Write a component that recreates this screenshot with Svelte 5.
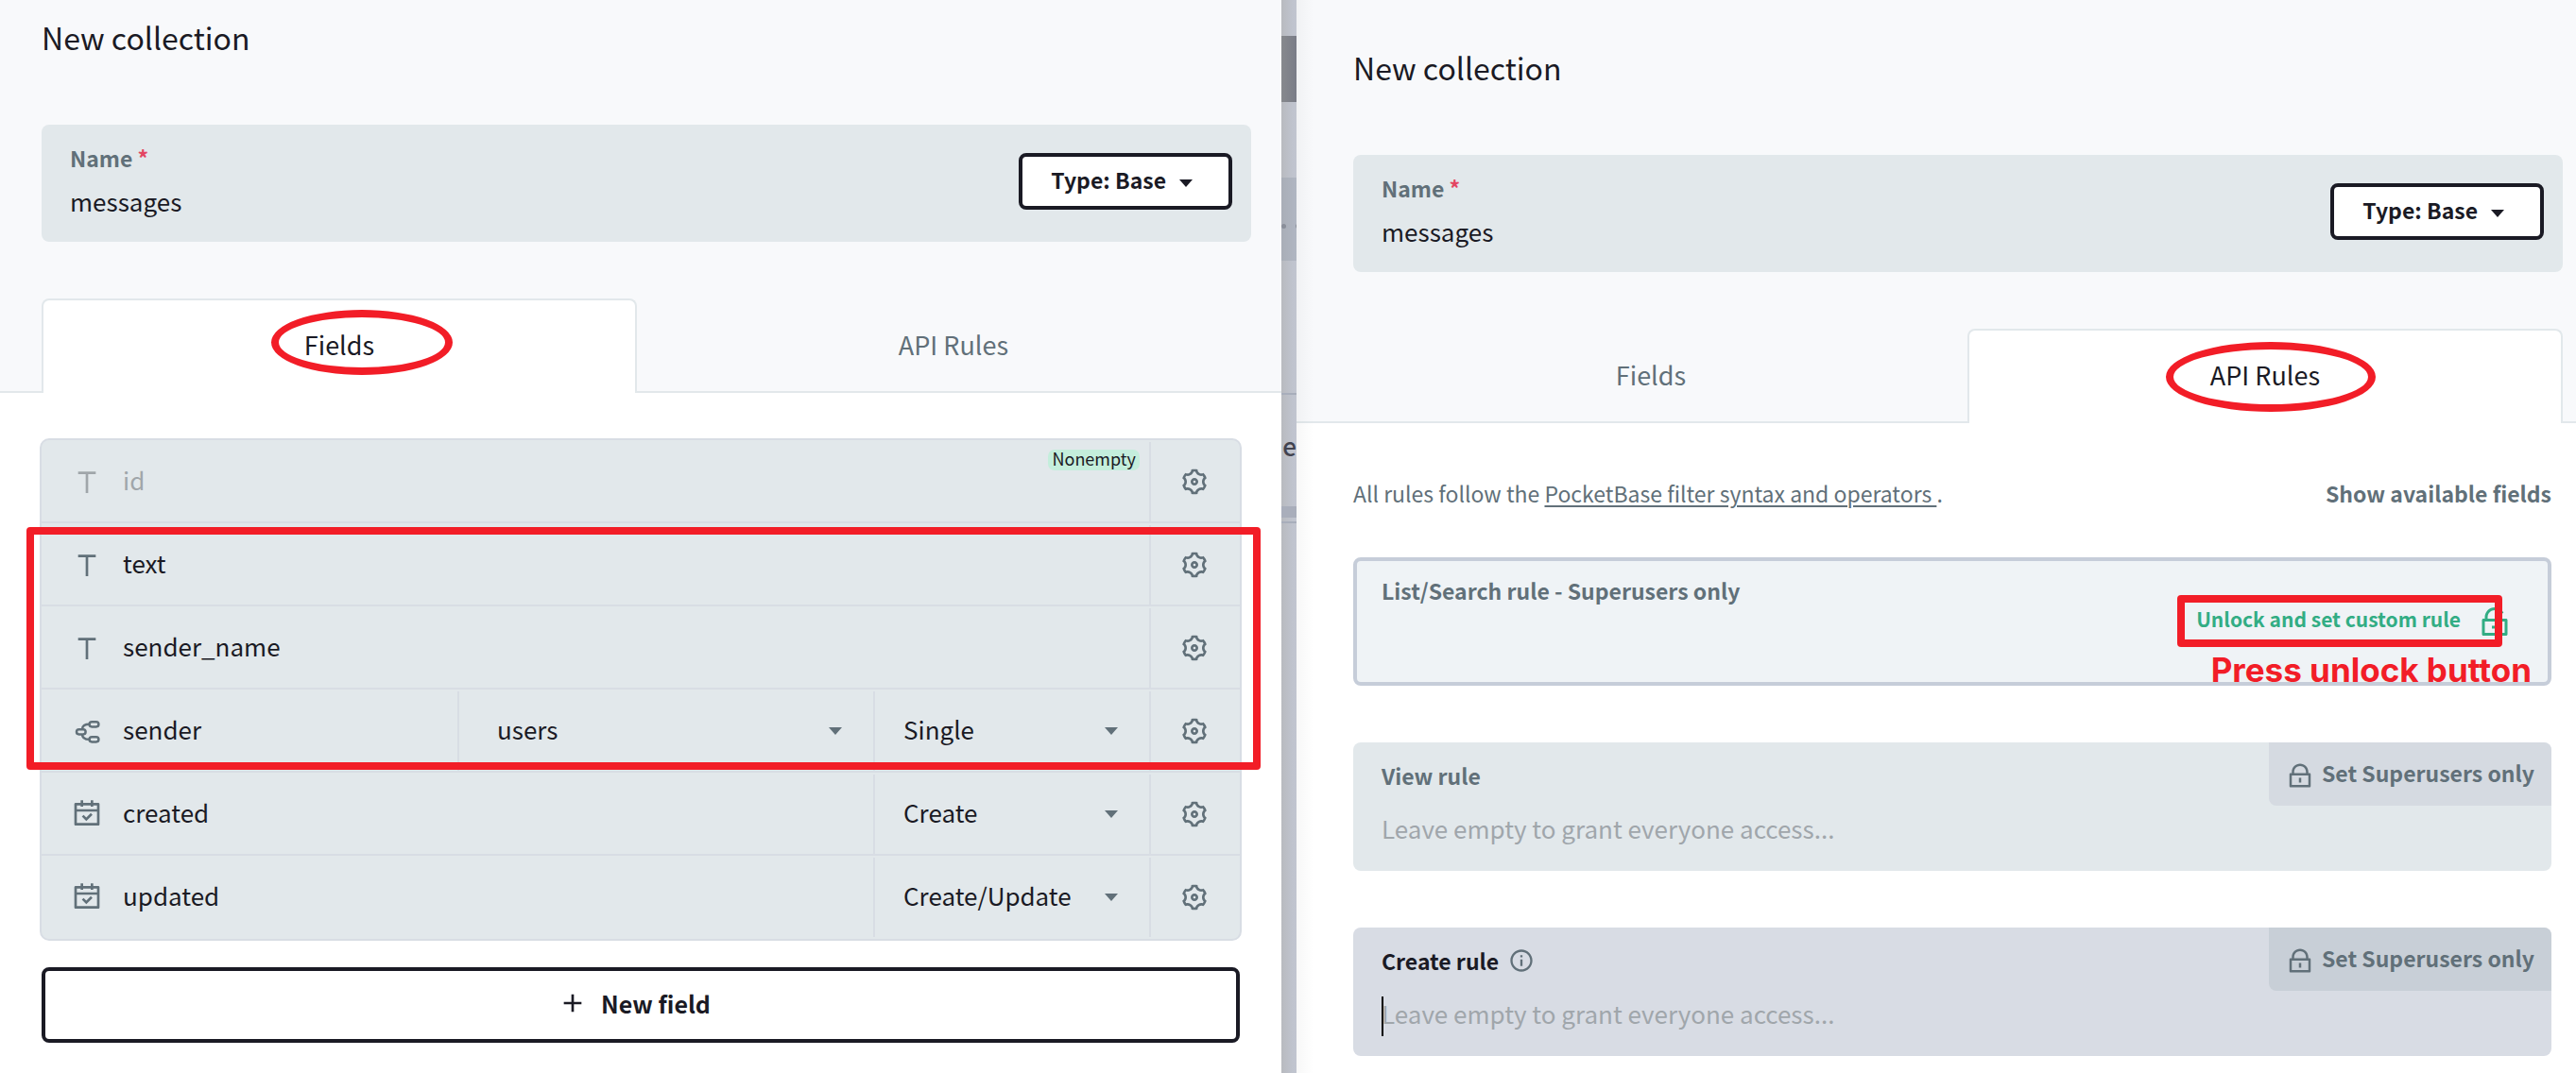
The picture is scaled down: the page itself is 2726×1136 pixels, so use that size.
<script>
  const fields = [
    { name: 'id', icon: 'text', locked: true, badge: 'Nonempty' },
    { name: 'text', icon: 'text' },
    { name: 'sender_name', icon: 'text' },
    {
      name: 'sender',
      icon: 'relation',
      selects: [
        { label: 'Related collection', options: ['users'], wide: true },
        { label: 'Relation type', options: ['Single', 'Multiple'] },
      ],
    },
    {
      name: 'created',
      icon: 'date',
      selects: [{ label: 'Set on', options: ['Create', 'Update', 'Create/Update'] }],
    },
    {
      name: 'updated',
      icon: 'date',
      selects: [{ label: 'Set on', options: ['Create/Update', 'Create', 'Update'] }],
    },
  ];

  const rules = [
    { id: 'view-rule', label: 'View rule' },
    { id: 'create-rule', label: 'Create rule', focused: true, info: true },
  ];

  const icons = {
    text: 'M13 6V21H11V6H5V4H19V6H13Z',
    date: 'M9 1V3H15V1H17V3H21C21.5523 3 22 3.44772 22 4V20C22 20.5523 21.5523 21 21 21H3C2.44772 21 2 20.5523 2 20V4C2 3.44772 2.44772 3 3 3H7V1H9ZM20 10H4V19H20V10ZM15.0355 11.136L16.4497 12.5503L11.5 17.5L7.96447 13.9645L9.37868 12.5503L11.5 14.6716L15.0355 11.136ZM7 5H4V8H20V5H17V6H15V5H9V6H7V5Z',
    gear: 'M3.33946 17.0002C2.90721 16.2515 2.58277 15.4702 2.36133 14.6741C3.3338 14.1779 3.99972 13.1668 3.99972 12.0002C3.99972 10.8345 3.3348 9.824 2.36353 9.32741C2.81174 7.71651 3.65855 6.21627 4.86474 4.99001C5.7807 5.58416 6.98935 5.65534 7.99972 5.072C9.01009 4.48866 9.55277 3.40635 9.4962 2.31604C11.1613 1.8846 12.8847 1.90004 14.5031 2.31862C14.4475 3.40806 14.9901 4.48912 15.9997 5.072C17.0101 5.65534 18.2187 5.58416 19.1346 4.99007C19.7133 5.57986 20.2277 6.25151 20.66 7.00021C21.0922 7.7489 21.4167 8.53025 21.6381 9.32628C20.6656 9.82247 19.9997 10.8336 19.9997 12.0002C19.9997 13.166 20.6646 14.1764 21.6359 14.673C21.1877 16.2839 20.3409 17.7842 19.1347 19.0104C18.2187 18.4163 17.0101 18.3451 15.9997 18.9284C14.9893 19.5117 14.4467 20.5941 14.5032 21.6844C12.8382 22.1158 11.1148 22.1004 9.49633 21.6818C9.55191 20.5923 9.00929 19.5113 7.99972 18.9284C6.98938 18.3451 5.78079 18.4162 4.86484 19.0103C4.28617 18.4205 3.77172 17.7489 3.33946 17.0002ZM8.99972 17.1964C10.0911 17.8265 10.8749 18.8227 11.2503 19.9659C11.7486 20.0133 12.2502 20.014 12.7486 19.9675C13.1238 18.8237 13.9078 17.8268 14.9997 17.1964C16.0916 16.5659 17.347 16.3855 18.5252 16.6324C18.8146 16.224 19.0648 15.7892 19.2729 15.334C18.4706 14.4373 17.9997 13.2604 17.9997 12.0002C17.9997 10.74 18.4706 9.5632 19.2729 8.6665C19.1688 8.4405 19.0538 8.21822 18.9279 8.00021C18.802 7.78219 18.667 7.57148 18.5233 7.36842C17.3457 7.61476 16.0911 7.43414 14.9997 6.80405C13.9083 6.17395 13.1246 5.17768 12.7491 4.03455C12.2509 3.98714 11.7492 3.98646 11.2509 4.03292C10.8756 5.17671 10.0916 6.17364 8.99972 6.80405C7.9078 7.43447 6.65245 7.61494 5.47428 7.36803C5.18485 7.77641 4.93463 8.21117 4.72656 8.66637C5.52881 9.56311 5.99972 10.74 5.99972 12.0002C5.99972 13.2604 5.52883 14.4372 4.72656 15.3339C4.83067 15.5599 4.94564 15.7822 5.07152 16.0002C5.19739 16.2182 5.3324 16.4289 5.47612 16.632C6.65377 16.3857 7.90838 16.5663 8.99972 17.1964ZM12 15C10.3431 15 9 13.6569 9 12C9 10.3431 10.3431 9 12 9C13.6569 9 15 10.3431 15 12C15 13.6569 13.6569 15 12 15ZM12 13C12.5523 13 13 12.5523 13 12C13 11.4477 12.5523 11 12 11C11.4477 11 11 11.4477 11 12C11 12.5523 11.4477 13 12 13Z',
    lock: 'M19 10H20C20.5523 10 21 10.4477 21 11V21C21 21.5523 20.5523 22 20 22H4C3.44772 22 3 21.5523 3 21V11C3 10.4477 3.44772 10 4 10H5V9C5 5.13401 8.13401 2 12 2C15.866 2 19 5.13401 19 9V10ZM5 12V20H19V12H5ZM11 14H13V18H11V14ZM17 10V9C17 6.23858 14.7614 4 12 4C9.23858 4 7 6.23858 7 9V10H17Z',
    unlock: 'M7 10H20C20.5523 10 21 10.4477 21 11V21C21 21.5523 20.5523 22 20 22H4C3.44772 22 3 21.5523 3 21V11C3 10.4477 3.44772 10 4 10H5V9C5 5.13401 8.13401 2 12 2C14.7405 2 17.1131 3.5748 18.2624 5.86882L16.4731 6.76344C15.6522 5.12486 13.9575 4 12 4C9.23858 4 7 6.23858 7 9V10ZM5 12V20H19V12H5ZM10 15H14V17H10V15Z',
    info: 'M12 22C6.47715 22 2 17.5228 2 12C2 6.47715 6.47715 2 12 2C17.5228 2 22 6.47715 22 12C22 17.5228 17.5228 22 12 22ZM12 20C16.4183 20 20 16.4183 20 12C20 7.58172 16.4183 4 12 4C7.58172 4 4 7.58172 4 12C4 16.4183 7.58172 20 12 20ZM11 7H13V9H11V7ZM11 11H13V17H11V11Z',
    plus: 'M11 11V5H13V11H19V13H13V19H11V13H5V11H11Z',
  };
</script>

{#snippet icon(name)}
  {#if name === 'relation'}
    <svg class="icon" viewBox="0 0 32 32" fill="none" stroke="currentColor" stroke-width="2.5" aria-hidden="true">
      <rect x="5" y="14.2" width="9.6" height="5.2" rx="2.6" />
      <rect x="18.6" y="6.2" width="9.8" height="5.2" rx="2.6" />
      <rect x="18.6" y="22.2" width="9.8" height="5.2" rx="2.6" />
      <path d="M11 14.2C11 10.4 13.6 8.8 18.6 8.8M11 19.4C11 23.2 13.6 24.8 18.6 24.8" />
    </svg>
  {:else}
    <svg class="icon" viewBox="0 0 24 24" fill="currentColor" aria-hidden="true"><path d={icons[name]} /></svg>
  {/if}
{/snippet}

{#snippet caret()}
  <svg class="caret" viewBox="0 0 14 8" fill="currentColor" aria-hidden="true"><path d="M0 0H14L7 8Z" /></svg>
{/snippet}

{#snippet header(prefix, active)}
  <header class="head">
    <h1>New collection</h1>
    <div class="name-box">
      <div class="name-field">
        <label for="{prefix}-name">Name <span class="required">*</span></label>
        <input id="{prefix}-name" type="text" value="messages" />
      </div>
      <button class="type" type="button"><span>Type: Base</span> {@render caret()}</button>
    </div>
    <div class="tabs" role="tablist">
      {#each ['Fields', 'API Rules'] as tab}
        <button class="tab" class:active={tab === active} type="button" role="tab" aria-selected={tab === active}>
          {tab}
          {#if tab === active}<span class="mark ring" class:ring-large={tab === 'API Rules'}></span>{/if}
        </button>
      {/each}
    </div>
  </header>
{/snippet}

<main class="shell">
  <section class="panel fields-panel">
    {@render header('fields', 'Fields')}
    <div class="body">
      <div class="list">
        {#each fields as field}
          <div class="row" class:locked={field.locked}>
            <div class="cell name">
              {@render icon(field.icon)}
              <input type="text" value={field.name} aria-label="Field name" disabled={field.locked} />
              {#if field.badge}<span class="badge">{field.badge}</span>{/if}
            </div>
            {#each field.selects ?? [] as select}
              <div class="cell pick" class:wide={select.wide}>
                <select aria-label={select.label}>
                  {#each select.options as option}<option>{option}</option>{/each}
                </select>
                {@render caret()}
              </div>
            {/each}
            <button class="cell settings" type="button" aria-label="Field settings">{@render icon('gear')}</button>
          </div>
        {/each}
        <span class="mark frame"></span>
      </div>
      <button class="new-field" type="button">{@render icon('plus')} New field</button>
    </div>
  </section>

  <div class="gutter" aria-hidden="true">
    <span class="bar dark"></span>
    <span class="bar search"><i></i><i></i></span>
    <span class="line"></span>
    <span class="word">De</span>
    <span class="bar thin"></span>
    <span class="line"></span>
  </div>

  <section class="panel rules-panel">
    {@render header('rules', 'API Rules')}
    <div class="body">
      <div class="intro">
        <p>All rules follow the <a href="#filter-syntax">PocketBase filter syntax and operators&nbsp;</a>.</p>
        <button class="plain" type="button">Show available fields</button>
      </div>

      <div class="rule disabled">
        <span class="rule-label">List/Search rule - Superusers only</span>
        <button class="unlock" type="button"><span>Unlock and set custom rule</span> {@render icon('unlock')}</button>
        <span class="mark unlock-frame"></span>
        <strong class="note">Press unlock button</strong>
      </div>

      {#each rules as rule}
        <div class="rule" class:focused={rule.focused}>
          <label class="rule-label" for={rule.id}>{rule.label}{#if rule.info}{@render icon('info')}{/if}</label>
          <input id={rule.id} type="text" placeholder="Leave empty to grant everyone access..." />
          {#if rule.focused}<span class="cursor"></span>{/if}
          <button class="lock" type="button">{@render icon('lock')} <span>Set Superusers only</span></button>
        </div>
      {/each}
    </div>
  </section>
</main>

<style>
  :global(body) {
    margin: 0;
    background: #fff;
  }

  .shell {
    --text: #1a1a24;
    --hint: #617079;
    --muted: #a0a6aa;
    --base: #f8f9fb;
    --alt1: #e2e8eb;
    --alt2: #d8dde4;
    --alt3: #c6cdd9;
    --red: #f21d27;
    display: grid;
    grid-template-columns: minmax(0, 1356fr) 16px minmax(0, 1354fr);
    min-height: 100vh;
    color: var(--text);
    font-family: "Noto Sans CJK SC", "Noto Sans", sans-serif;
    font-size: 26px;
  }

  button,
  input,
  select {
    margin: 0;
    padding: 0;
    border: 0;
    background: none;
    color: inherit;
    font: inherit;
    outline: 0;
  }

  button {
    cursor: pointer;
  }

  input {
    box-sizing: border-box;
    min-width: 0;
    padding-bottom: 4px;
    caret-color: transparent;
  }

  .icon {
    flex: none;
    width: 32px;
    height: 32px;
  }

  .caret {
    flex: none;
    width: 14px;
    height: 8px;
  }

  .mark {
    position: absolute;
    box-sizing: border-box;
    border: 8px solid var(--red);
    pointer-events: none;
  }

  /* Panel header */
  .panel {
    position: relative;
    background: #fff;
  }

  .head {
    padding: 18px 32px 0 44px;
    border-bottom: 2px solid var(--alt1);
    background: var(--base);
  }

  .rules-panel .head {
    padding: 50px 14px 0 60px;
  }

  h1 {
    margin: 0 0 72px;
    font-size: 32px;
    font-weight: 400;
    line-height: 42px;
  }

  .name-box {
    display: flex;
    align-items: flex-start;
    margin-bottom: 60px;
    padding: 18px 20px 12px 30px;
    border-radius: 8px;
    background: var(--alt1);
  }

  .name-field {
    display: flex;
    flex: 1;
    flex-direction: column;
  }

  .name-field label {
    color: var(--hint);
    font-size: 23px;
    font-weight: 700;
    line-height: 34px;
  }

  .required {
    color: #e34562;
  }

  .name-field input {
    height: 60px;
  }

  .type {
    display: flex;
    align-items: center;
    gap: 14px;
    box-sizing: border-box;
    height: 60px;
    margin-top: 12px;
    padding: 0 38px 0 30px;
    border: 4px solid var(--text);
    border-radius: 8px;
    background: #fff;
    font-size: 23px;
    font-weight: 700;
  }

  .type span {
    padding-bottom: 4px;
  }

  .type .caret {
    margin-top: 4px;
  }

  .tabs {
    display: grid;
    grid-template-columns: 1fr 1fr;
    gap: 20px;
    margin-bottom: -2px;
  }

  .tab {
    position: relative;
    height: 100px;
    padding-bottom: 6px;
    border: 2px solid transparent;
    border-bottom: 0;
    border-radius: 8px 8px 0 0;
    color: var(--hint);
    font-size: 27px;
  }

  .tab.active {
    border-color: var(--alt1);
    background: #fff;
    color: var(--text);
  }

  .ring {
    top: 10px;
    left: 50%;
    width: 192px;
    height: 69px;
    margin-left: -72px;
    border-radius: 50%;
  }

  .ring-large {
    top: 12px;
    width: 222px;
    height: 74px;
    margin-left: -105px;
  }

  /* Fields */
  .fields-panel .body {
    padding: 48px 44px 32px;
  }

  .list {
    position: relative;
    margin: 0 -2px 28px;
    border: 2px solid var(--alt2);
    border-radius: 10px;
    background: var(--alt1);
  }

  .row {
    display: flex;
    box-sizing: border-box;
    height: 88px;
    border-top: 2px solid transparent;
    border-bottom: 2px solid var(--alt2);
  }

  .row:nth-last-child(2) {
    border-bottom-color: transparent;
  }

  .cell {
    box-sizing: border-box;
  }

  .name {
    position: relative;
    display: flex;
    flex: 1;
    align-items: center;
    gap: 22px;
    padding-left: 32px;
    color: var(--hint);
  }

  .name input {
    flex: 1;
    height: 100%;
    padding-bottom: 6px;
    color: var(--text);
  }

  .locked .name,
  .locked .name input {
    color: var(--muted);
  }

  .badge {
    position: absolute;
    top: 8px;
    right: 10px;
    padding: 0 4px 4px;
    border-radius: 7px;
    background: #c4eedc;
    color: var(--text);
    font-size: 18px;
    line-height: 18px;
  }

  .pick {
    display: grid;
    align-items: center;
    width: 292px;
    border-left: 2px solid var(--alt2);
    color: var(--hint);
  }

  .pick.wide {
    width: 440px;
  }

  .pick > :global(*) {
    grid-area: 1 / 1;
  }

  .pick select {
    height: 100%;
    padding: 0 60px 6px 30px;
    appearance: none;
    color: var(--text);
  }

  .pick.wide select {
    padding-left: 40px;
  }

  .pick .caret {
    justify-self: end;
    margin-right: 33px;
    pointer-events: none;
  }

  .settings {
    display: flex;
    align-items: center;
    justify-content: center;
    width: 96px;
    padding-right: 2px;
    border-left: 2px solid var(--alt2);
    color: var(--hint);
  }

  .frame {
    top: 92px;
    right: -22px;
    left: -16px;
    height: 257px;
    border-radius: 4px;
  }

  .new-field {
    display: flex;
    align-items: center;
    justify-content: center;
    gap: 14px;
    width: 100%;
    height: 80px;
    padding: 0 14px 4px 0;
    border: 4px solid var(--text);
    border-radius: 8px;
    background: #fff;
    font-size: 25px;
    font-weight: 700;
  }

  /* Strip of the page behind both panels */
  .gutter {
    display: flex;
    flex-direction: column;
    align-items: stretch;
    overflow: hidden;
    padding-top: 38px;
    background: linear-gradient(90deg, #b8babf, #bfc3cd 70%, #c1c5d0);
  }

  .gutter .dark {
    height: 70px;
    margin-bottom: 80px;
    background: linear-gradient(90deg, #87898d, #797c87);
  }

  .gutter .search {
    display: flex;
    align-items: center;
    gap: 10px;
    height: 88px;
    margin-bottom: 140px;
    padding-top: 14px;
    box-sizing: border-box;
    background: linear-gradient(90deg, #a9aeb7, #b0b6c2);
  }

  .gutter i {
    flex: none;
    width: 5px;
    height: 5px;
    border-radius: 50%;
    background: #8a8f9a;
  }

  .gutter .line {
    height: 2px;
    background: #a8aebb;
  }

  .gutter .word {
    align-self: flex-end;
    height: 118px;
    color: #42434f;
    font-size: 26px;
    font-weight: 500;
    line-height: 108px;
  }

  .gutter .thin {
    height: 12px;
    margin-bottom: 4px;
    background: #a9aebb;
  }

  /* API rules */
  .rules-panel::before {
    position: absolute;
    top: 0;
    bottom: 0;
    left: 0;
    width: 18px;
    background: linear-gradient(90deg, rgb(0 10 0 / 3%), transparent);
    content: "";
    pointer-events: none;
  }

  .rules-panel .body {
    padding: 56px 26px 18px 60px;
  }

  .intro {
    display: flex;
    justify-content: space-between;
    margin-bottom: 50px;
    color: var(--hint);
    font-size: 23px;
    line-height: 36px;
  }

  .intro p {
    margin: 0;
  }

  .intro a {
    color: inherit;
    text-decoration: underline;
    text-decoration-thickness: 2px;
    text-underline-offset: 3px;
  }

  .plain {
    font-weight: 700;
  }

  .rule {
    position: relative;
    display: flex;
    flex-direction: column;
    box-sizing: border-box;
    height: 136px;
    margin-bottom: 60px;
    padding: 18px 30px 0;
    border-radius: 8px;
    background: var(--alt1);
    color: var(--hint);
  }

  .rule:last-child {
    margin-bottom: 0;
  }

  .rule.disabled {
    padding: 14px 26px 0;
    border: 4px solid var(--alt3);
    background: #eff3f6;
  }

  .rule.focused {
    background: #d8dce4;
  }

  .rule-label {
    display: flex;
    align-items: center;
    align-self: flex-start;
    gap: 10px;
    font-size: 23px;
    font-weight: 700;
    line-height: 34px;
  }

  .rule-label .icon {
    width: 28px;
    height: 28px;
    color: var(--hint);
  }

  .focused .rule-label {
    color: var(--text);
  }

  .rule input {
    height: 80px;
  }

  .rule input::placeholder {
    color: #a0a6ab;
    opacity: 1;
  }

  .cursor {
    position: absolute;
    top: 73px;
    left: 30px;
    width: 2px;
    height: 42px;
    background: #000;
  }

  .lock {
    position: absolute;
    top: 0;
    right: 0;
    display: flex;
    align-items: center;
    gap: 8px;
    height: 67px;
    padding: 0 18px;
    border-radius: 0 8px;
    background: #d5dae1;
    font-size: 23px;
    font-weight: 700;
  }

  .lock span {
    padding-bottom: 4px;
  }

  .lock .icon {
    width: 30px;
    height: 30px;
    margin-top: 2px;
  }

  .focused .lock {
    background: #c8cfd7;
  }

  .unlock {
    position: absolute;
    top: 0;
    right: 0;
    bottom: 0;
    display: flex;
    align-items: center;
    gap: 18px;
    padding-right: 38px;
    color: #32ad84;
    font-size: 21px;
    font-weight: 700;
  }

  .unlock span {
    padding-bottom: 6px;
  }

  .unlock .icon {
    width: 36px;
    height: 36px;
  }

  .unlock-frame {
    top: 36px;
    right: 48px;
    width: 344px;
    height: 55px;
    border-radius: 4px;
  }

  .note {
    position: absolute;
    top: 95px;
    right: 17px;
    color: var(--red);
    font-family: Inter, sans-serif;
    font-size: 35px;
    font-weight: 700;
    line-height: 40px;
    white-space: nowrap;
  }
</style>
